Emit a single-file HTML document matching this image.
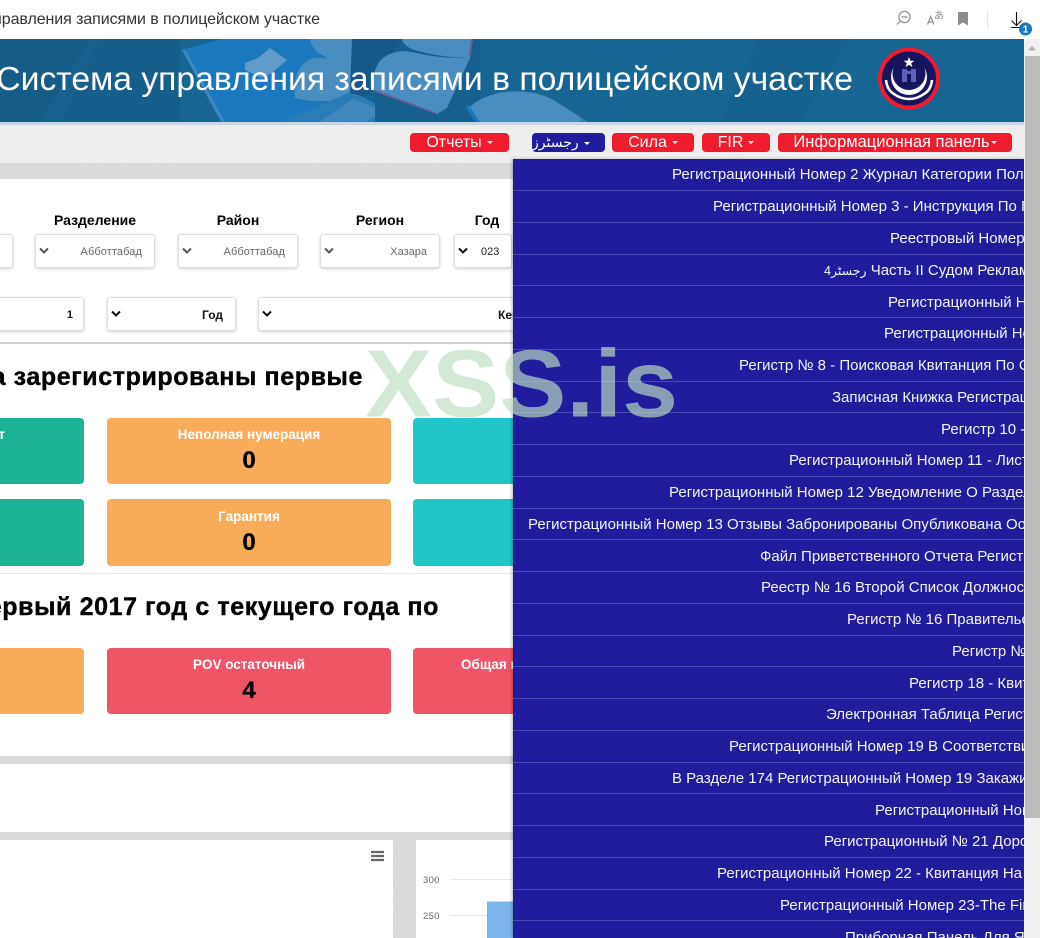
<!DOCTYPE html>
<html lang="ru">
<head>
<meta charset="utf-8">
<title>Система управления записями в полицейском участке</title>
<style>
html,body{margin:0;padding:0;width:1040px;height:938px;overflow:hidden;background:#fff;font-family:"Liberation Sans","DejaVu Sans",sans-serif}
.a{position:absolute}
#page{position:relative;width:1040px;height:938px;overflow:hidden}
.nw{white-space:nowrap}
.btn{position:absolute;top:133px;height:19px;background:#ee1c2c;border-radius:4px;color:#fff;font-size:16px;line-height:19px;text-align:center;white-space:nowrap}
.btn i{display:inline-block;width:0;height:0;border-left:3.5px solid transparent;border-right:3.5px solid transparent;border-top:3.5px solid #fff;vertical-align:middle;margin-left:5px}
.lbl{position:absolute;top:212px;font-size:14px;font-weight:bold;color:#000;line-height:16px;text-align:center;width:120px}
.sel{position:absolute;background:#fff;border:1px solid #ddd;border-radius:3px;box-shadow:0 1px 3px rgba(0,0,0,.18);box-sizing:border-box;white-space:nowrap;overflow:hidden}
.sel svg{position:absolute;left:3px}
.sel span{position:absolute;line-height:16px}
.tile{position:absolute;border-radius:4px;color:#fff;text-align:center;font-weight:bold;font-size:13.5px;overflow:hidden;white-space:nowrap}
.tile b{display:block;color:#000;font-size:24px;line-height:28px;margin-top:4px;-webkit-text-stroke:.3px #000}
.tile span{display:block;line-height:16px;padding-top:9px;color:#fff}
.h{position:absolute;font-size:25px;font-weight:bold;color:#000;white-space:nowrap;text-align:right;line-height:28px;letter-spacing:.6px;-webkit-text-stroke:.4px #000}
#dd{position:absolute;left:513px;top:159px;width:511px;height:779px;background:#201c9b;overflow:hidden;box-shadow:-1px 0 3px rgba(0,0,0,.3)}
#dd div{position:absolute;white-space:nowrap;color:#f4f4f4;font-size:15px;line-height:16px;margin-top:1px}
#dd hr{position:absolute;left:0;width:511px;height:1px;margin:0;border:0;background:#4a48b4}
</style>
</head>
<body>
<div id="page">

<!-- textured page background -->
<svg class="a" style="left:0;top:122px" width="1040" height="816">
<defs><filter id="n" x="0" y="0" width="100%" height="100%"><feTurbulence type="fractalNoise" baseFrequency=".9" numOctaves="2" seed="3"/><feColorMatrix values="0 0 0 0 .5  0 0 0 0 .5  0 0 0 0 .5  .5 0 0 0 -.12"/></filter></defs>
<rect width="1040" height="816" fill="#dedede"/>
<rect width="1040" height="816" filter="url(#n)"/>
</svg>

<!-- browser bar -->
<div class="a" style="left:0;top:0;width:1040px;height:39px;background:#fff"></div>
<div class="a nw" style="right:720px;top:11px;font-size:16px;line-height:18px;color:#333;letter-spacing:-.08px">Система управления записями в полицейском участке</div>
<svg class="a" style="left:890px;top:0" width="150" height="39" fill="none">
<circle cx="14.500" cy="17" r="5.600" stroke="#8f8f8f" stroke-width="1.200"/><path d="M11.500 17h6M10.500 21l-3.500 3.500" stroke="#8f8f8f" stroke-width="1.200"/>
<path d="M37.500 24.500l3.200-8 3.200 8M38.700 22h4" stroke="#8f8f8f" stroke-width="1.200"/>
<text x="44" y="19" font-size="10" fill="#8f8f8f" font-family="'Noto Sans CJK JP',sans-serif">あ</text>
<path d="M68 12h10v13.500l-5-3-5 3z" fill="#8d8d8d"/>
<path d="M97.500 11v16" stroke="#e2e2e2"/>
<path d="M126.500 12v13M121.500 20.500l5 5 5-5M121 27.500h11" stroke="#111" stroke-width="1.100"/>
<circle cx="135.500" cy="29" r="6.500" fill="#1a78c2"/>
<text x="135.500" y="32.500" font-size="10" font-weight="bold" text-anchor="middle" fill="#fff" font-family="'Liberation Sans',sans-serif">1</text>
</svg>

<!-- header -->
<svg class="a" style="left:0;top:39px" width="1024" height="83">
<rect width="1024" height="83" fill="#17628f"/>
<path d="M0 0H90L40 83H0z" fill="#155c88"/>
<path d="M100 0H180V83H60z" fill="#165f8c"/>
<path d="M180 0H1024V83H180z" fill="#176592"/>
<path d="M182 11L222 0H360V55L300 83H222z" fill="#1c78bd"/>
<path d="M182 11l3-1 40 73h-4z" fill="#4a8dc0" opacity=".7"/>
<path d="M245 24L258 19 270 9 287 21 273 33 262 39 245 31z" fill="#5f9cc9"/>
<path d="M310 0H360L356 22 350 54 345 56 330 40 326 18Q312 12 310 0z" fill="#4a8dc0"/>
<path d="M295 59Q292 30 310 20 326 16 336 26L348 55 340 62 310 62z" fill="#4a8dc0"/>
<path d="M283 83L352 52 410 83z" fill="#2a7cb6"/>
<path d="M320 83L352 60 385 72 365 83z" fill="#4188be"/>
<path d="M352 0H400L373 51 365 58 350 54z" fill="#14598a"/>
<path d="M400 0H480V83H375V50z" fill="#15608f"/>
<path d="M373 51Q372 28 383 19 395 10 412 13 440 20 470 19L447 69 437 75z" fill="#4a8dc0"/>
<path d="M402 0H473L470 19Q435 18 412 10 403 6 402 0z" fill="#4a8dc0"/>
<path d="M373 50l64 24 1 2-65-24z" fill="#6c5b95"/>
<path d="M471 0h2l-2 16h-2z" fill="#6c5b95"/>
<path d="M467 70Q482 56 505 53 535 50 555 62L588 83H478z" fill="#4a8dc0"/>
<path d="M466 68l3-2 11 17h-5z" fill="#1c78bd"/>
<path d="M600 0h90l-70 83h-40z" fill="#1a6a9d" opacity=".4"/>
<path d="M760 0h90l-50 83h-80z" fill="#145e8b" opacity=".5"/>
<circle cx="909" cy="39.500" r="31" fill="#ee1c2c"/>
<circle cx="909" cy="39.500" r="27" fill="#17155f"/>
<circle cx="909" cy="38" r="18" fill="#fff"/>
<circle cx="909" cy="34.500" r="16.500" fill="#17155f"/>
<path d="M886 41q1 10 8 14 7 5 15 5 8 0 15-5 7-4 8-14" fill="none" stroke="#fff" stroke-width="2.600"/>
<path d="M909 18l1.400 3.800h4l-3.200 2.400 1.200 3.900-3.400-2.300-3.400 2.300 1.200-3.900-3.200-2.400h4z" fill="#fff"/>
<path d="M902 30h5v13h-5zM911 30h5v13h-5zM907 32h4v3h-4z" fill="#5c62b8"/>
</svg>
<div class="a nw" style="right:187px;top:60px;font-size:33.700px;line-height:38px;color:#fff">Система управления записями в полицейском участке</div>
<div class="a" style="left:0;top:122px;width:1024px;height:3px;background:#c9d7e2"></div>

<!-- nav bar -->
<div class="a" style="left:0;top:125px;width:1024px;height:38px;background:rgba(255,255,255,.55)"></div>
<div class="btn" style="left:410px;width:99px">Отчеты<i></i></div>
<div class="btn" style="left:532px;width:73px;background:#201c9b;font-size:14px;text-align:left">رجسٹرز<i></i></div>
<div class="btn" style="left:612px;width:82px">Сила<i></i></div>
<div class="btn" style="left:702px;width:68px">FIR<i></i></div>
<div class="btn" style="left:778px;width:234px;font-size:16.500px">Информационная панель<i style="margin-left:1px"></i></div>

<!-- main panel -->
<div class="a" style="left:0;top:179px;width:1024px;height:577px;background:#fff"></div>
<div class="a" style="left:0;top:764px;width:1024px;height:68px;background:#fff"></div>
<div class="a" style="left:0;top:840px;width:393px;height:98px;background:#fff"></div>
<div class="a" style="left:416px;top:840px;width:608px;height:98px;background:#fff"></div>

<div class="lbl" style="left:35px">Разделение</div>
<div class="lbl" style="left:178px">Район</div>
<div class="lbl" style="left:320px">Регион</div>
<div class="lbl" style="left:427px">Год</div>

<div class="sel" style="left:-20px;top:234px;width:33px;height:34px"></div>
<div class="sel" style="left:35px;top:234px;width:120px;height:34px"><svg style="top:12px" width="10" height="8"><path d="M1 1.500l4 4 4-4" fill="none" stroke="#555" stroke-width="2"/></svg><span style="right:12px;top:9px;font-size:11px;color:#666;letter-spacing:.1px">Абботтабад</span></div>
<div class="sel" style="left:178px;top:234px;width:120px;height:34px"><svg style="top:12px" width="10" height="8"><path d="M1 1.500l4 4 4-4" fill="none" stroke="#555" stroke-width="2"/></svg><span style="right:12px;top:9px;font-size:11px;color:#666;letter-spacing:.1px">Абботтабад</span></div>
<div class="sel" style="left:320px;top:234px;width:120px;height:34px"><svg style="top:12px" width="10" height="8"><path d="M1 1.500l4 4 4-4" fill="none" stroke="#555" stroke-width="2"/></svg><span style="right:12px;top:9px;font-size:11px;color:#666">Хазара</span></div>
<div class="sel" style="left:454px;top:234px;width:58px;height:34px"><svg style="top:12px" width="10" height="8"><path d="M1 1.500l4 4 4-4" fill="none" stroke="#111" stroke-width="2"/></svg><span style="left:26px;top:9px;font-size:11px;color:#222">023</span></div>

<div class="sel" style="left:-30px;top:297px;width:114px;height:34px"><span style="right:10px;top:9px;font-size:11px;font-weight:bold;color:#111">1</span></div>
<div class="sel" style="left:107px;top:297px;width:129px;height:34px"><svg style="top:12px" width="10" height="8"><path d="M1 1.500l4 4 4-4" fill="none" stroke="#111" stroke-width="2"/></svg><span style="right:12px;top:9px;font-size:12px;font-weight:bold;color:#111">Год</span></div>
<div class="sel" style="left:258px;top:297px;width:300px;height:34px"><svg style="top:12px" width="10" height="8"><path d="M1 1.500l4 4 4-4" fill="none" stroke="#111" stroke-width="2"/></svg><span style="left:239px;top:9px;font-size:12px;font-weight:bold;color:#111">Кейс</span></div>

<div class="a" style="left:0;top:342px;width:513px;height:2px;background:#d0d0d0"></div>
<div class="h" style="right:677px;top:363px">Сколько дела зарегистрированы первые</div>

<div class="tile" style="left:-60px;top:418px;width:144px;height:66px;background:#1bb394"><span style="text-align:right;padding-right:79px">т</span></div>
<div class="tile" style="left:107px;top:418px;width:284px;height:66px;background:#f9ad5b"><span>Неполная нумерация</span><b>0</b></div>
<div class="tile" style="left:413px;top:418px;width:200px;height:66px;background:#21c6c8"></div>
<div class="tile" style="left:-60px;top:499px;width:144px;height:67px;background:#1bb394"></div>
<div class="tile" style="left:107px;top:499px;width:284px;height:67px;background:#f9ad5b"><span style="padding-top:10px">Гарантия</span><b>0</b></div>
<div class="tile" style="left:413px;top:499px;width:200px;height:67px;background:#21c6c8"></div>

<div class="a" style="left:0;top:573px;width:513px;height:1px;background:#e8e8e8"></div>
<div class="h" style="right:601px;top:593px">Первый 2017 год с текущего года по</div>

<div class="tile" style="left:-60px;top:648px;width:144px;height:66px;background:#f9ad5b"></div>
<div class="tile" style="left:107px;top:648px;width:284px;height:66px;background:#ef5566"><span>POV остаточный</span><b>4</b></div>
<div class="tile" style="left:413px;top:648px;width:200px;height:66px;background:#ef5566"><span style="text-align:left;padding-left:48px">Общая нагрузка</span></div>

<!-- charts -->
<svg class="a" style="left:0;top:840px" width="513" height="98">
<path d="M371 12h13M371 16h13M371 20h13" stroke="#666" stroke-width="2.200"/>
<path d="M450 39.500h63M450 75.500h63" stroke="#e9e9e9"/>
<text x="423" y="43" font-size="9.500" fill="#666" font-family="'Liberation Sans',sans-serif" letter-spacing=".3">300</text>
<text x="423" y="79" font-size="9.500" fill="#666" font-family="'Liberation Sans',sans-serif" letter-spacing=".3">250</text>
<rect x="487" y="61.500" width="26" height="37" fill="#7cb5ec"/>
</svg>

<!-- dropdown -->
<div id="dd">
<div style="left:159px;top:7px">Регистрационный Номер 2 Журнал Категории Полиции</div><hr style="top:31px">
<div style="left:200px;top:39px">Регистрационный Номер 3 - Инструкция По Патрулированию</div><hr style="top:63px">
<div style="left:377px;top:71px">Реестровый Номер 4</div><hr style="top:95px">
<div style="left:311px;top:103px"><span style="font-size:12.500px">رجسٹر4</span> Часть II Судом Рекламации</div><hr style="top:126px">
<div style="left:375px;top:135px">Регистрационный Номер 5</div><hr style="top:158px">
<div style="left:371px;top:166px">Регистрационный Номер 6</div><hr style="top:190px">
<div style="left:226px;top:198px">Регистр № 8 - Поисковая Квитанция По Ордеру</div><hr style="top:222px">
<div style="left:319px;top:230px">Записная Книжка Регистрации</div><hr style="top:253px">
<div style="left:428px;top:262px">Регистр 10 - Лист</div><hr style="top:285px">
<div style="left:276px;top:293px">Регистрационный Номер 11 - Листинг Дел</div><hr style="top:317px">
<div style="left:156px;top:325px">Регистрационный Номер 12 Уведомление О Разделе 54</div><hr style="top:349px">
<div style="left:15px;top:357px">Регистрационный Номер 13 Отзывы Забронированы Опубликована Особо</div><hr style="top:380px">
<div style="left:247px;top:389px">Файл Приветственного Отчета Регистра</div><hr style="top:412px">
<div style="left:248px;top:420px">Реестр № 16 Второй Список Должностей</div><hr style="top:444px">
<div style="left:334px;top:452px">Регистр № 16 Правительство</div><hr style="top:476px">
<div style="left:439px;top:484px">Регистр № 17</div><hr style="top:507px">
<div style="left:396px;top:516px">Регистр 18 - Квитанция</div><hr style="top:539px">
<div style="left:313px;top:547px">Электронная Таблица Регистра</div><hr style="top:571px">
<div style="left:216px;top:579px">Регистрационный Номер 19 В Соответствии С</div><hr style="top:603px">
<div style="left:159px;top:611px">В Разделе 174 Регистрационный Номер 19 Закажите Копию</div><hr style="top:634px">
<div style="left:362px;top:643px">Регистрационный Номер 20</div><hr style="top:666px">
<div style="left:311px;top:674px">Регистрационный № 21 Дорожный</div><hr style="top:698px">
<div style="left:204px;top:706px">Регистрационный Номер 22 - Квитанция На Оплату</div><hr style="top:730px">
<div style="left:267px;top:738px">Регистрационный Номер 23-The Final</div><hr style="top:761px">
<div style="left:332px;top:770px">Приборная Панель Для Я</div>
</div>

<!-- watermark -->
<div class="a nw" style="left:365px;top:328px;font-size:100.600px;line-height:112px;font-weight:bold;color:rgba(190,222,194,.67);transform:scaleY(.95);transform-origin:50% 50%">XSS.is</div>

<!-- scrollbar -->
<div class="a" style="left:1024px;top:39px;width:16px;height:899px;background:#f1f1f1"></div>
<div class="a" style="left:1025px;top:56px;width:15px;height:762px;background:#bcbcbc"></div>
<svg class="a" style="left:1024px;top:39px" width="16" height="17"><path d="M4 11.500L8 7l4 4.500z" fill="#b0b0b0"/></svg>

</div>
</body>
</html>
